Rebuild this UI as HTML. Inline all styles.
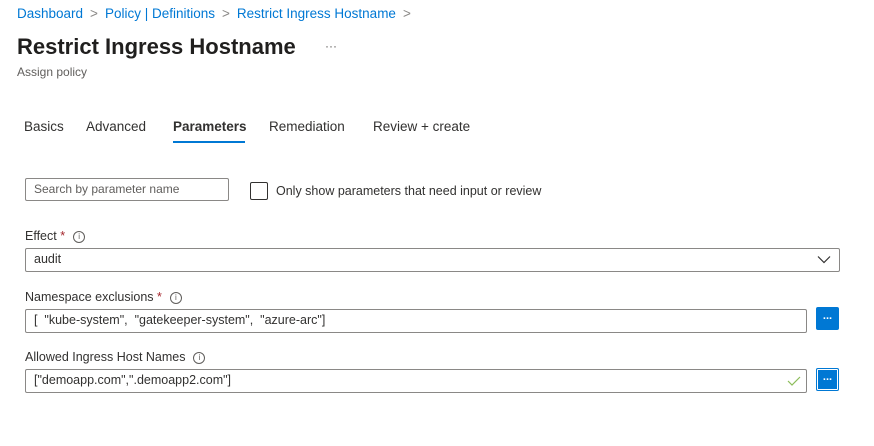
<!DOCTYPE html>
<html><head><meta charset="utf-8"><style>
body{margin:0;width:874px;height:446px;background:#fff;font-family:"Liberation Sans",sans-serif;color:#323130;position:relative;overflow:hidden}
.a{position:absolute;white-space:nowrap}
.bc{top:6px;left:17px;font-size:13.5px;color:#0078d4}
.bc span.s{color:#8a8886;margin:0 7px}
.box{position:absolute;border:1px solid #8a8886;border-radius:2px;box-sizing:border-box;font-size:12.5px;padding-left:8px;line-height:21px;background:#fff}
.lbl{font-size:12.5px}
.req{color:#a4262c}
.i{display:inline-block;width:10px;height:10px;border:1px solid #605e5c;border-radius:50%;font-size:8px;line-height:10px;text-align:center;color:#605e5c;margin-left:8px;vertical-align:1px}
.btn{position:absolute;width:23px;height:23px;background:#0078d4;border-radius:2px;color:#fff;font-size:11px;text-align:center;line-height:18px;font-weight:bold}
.tab{top:119px;font-size:13.5px}
</style></head><body>
<div class="a bc">Dashboard<span class="s">&gt;</span>Policy | Definitions<span class="s">&gt;</span>Restrict Ingress Hostname<span class="s">&gt;</span></div>
<div class="a" style="top:34px;left:17px;font-size:22px;font-weight:bold;color:#201f1e">Restrict Ingress Hostname</div>
<div class="a" style="top:39px;left:325px;font-size:12px;color:#605e5c">···</div>
<div class="a" style="top:65px;left:17px;font-size:12px;color:#605e5c">Assign policy</div>
<div class="a tab" style="left:24px">Basics</div>
<div class="a tab" style="left:86px">Advanced</div>
<div class="a tab" style="left:173px;font-weight:bold">Parameters</div>
<div class="a" style="top:141px;left:173px;width:72px;height:2px;background:#0078d4"></div>
<div class="a tab" style="left:269px">Remediation</div>
<div class="a tab" style="left:373px">Review + create</div>
<div class="box" style="left:25px;top:178px;width:204px;height:23px;color:#605e5c;font-size:12px">Search by parameter name</div>
<div class="a" style="left:250px;top:182px;width:18px;height:18px;border:1px solid #323130;border-radius:2px;box-sizing:border-box"></div>
<div class="a" style="left:276px;top:184px;font-size:12.5px">Only show parameters that need input or review</div>
<div class="a lbl" style="left:25px;top:229px">Effect <span class="req">*</span><span class="i">i</span></div>
<div class="box" style="left:25px;top:248px;width:815px;height:24px">audit</div>
<svg class="a" style="left:817px;top:255px" width="14" height="9"><path d="M1 1.5L7 7.5L13 1.5" fill="none" stroke="#323130" stroke-width="1.2"/></svg>
<div class="a lbl" style="left:25px;top:290px">Namespace exclusions <span class="req">*</span><span class="i">i</span></div>
<div class="box" style="left:25px;top:309px;width:782px;height:24px">[&nbsp; "kube-system",&nbsp; "gatekeeper-system",&nbsp; "azure-arc"]</div>
<div class="btn" style="left:816px;top:307px">...</div>
<div class="a lbl" style="left:25px;top:350px">Allowed Ingress Host Names<span class="i">i</span></div>
<div class="box" style="left:25px;top:369px;width:782px;height:24px">["demoapp.com",".demoapp2.com"]</div>
<svg class="a" style="left:787px;top:376px" width="14" height="10"><path d="M1 5L5 9L13 1" fill="none" stroke="#8cbd5a" stroke-width="1.2"/></svg>
<div class="btn" style="left:816px;top:368px;box-shadow:inset 0 0 0 1px #0078d4,inset 0 0 0 2px #fff">...</div>
</body></html>
